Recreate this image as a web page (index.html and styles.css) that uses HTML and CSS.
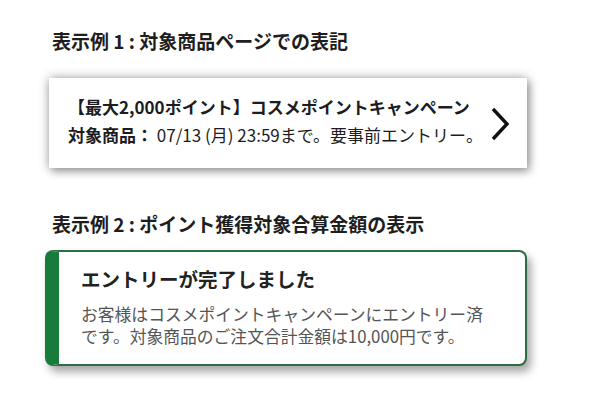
FILE: index.html
```html
<!DOCTYPE html>
<html lang="ja">
<head>
    <meta charset="UTF-8">
    <meta name="viewport" content="width=device-width, initial-scale=1.0">
    <title>表示例</title>
    <link rel="stylesheet" href="styles.css">
</head>
<body>
    <main class="samples">
        <h2 class="sample-title">表示例 1 : 対象商品ページでの表記</h2>

        <a href="#" class="campaign-card">
            <div class="campaign-text">
                <p class="campaign-name">【最大2,000ポイント】コスメポイントキャンペーン</p>
                <p class="campaign-term"><strong>対象商品：</strong> 07/13 (月) 23:59まで。要事前エントリー。</p>
            </div>
            <svg class="chevron" width="20" height="36" viewBox="0 0 20 36">
                <path d="M3 3 L17 18 L3 33" fill="none" stroke="#111" stroke-width="3.4"/>
            </svg>
        </a>

        <h2 class="sample-title second">表示例 2 : ポイント獲得対象合算金額の表示</h2>

        <div class="entry-notice">
            <h3>エントリーが完了しました</h3>
            <p>お客様はコスメポイントキャンペーンにエントリー済<br>です。対象商品のご注文合計金額は10,000円です。</p>
        </div>
    </main>
</body>
</html>
```

FILE: styles.css
```css
body {
    margin: 0;
    padding: 0;
    background-color: #ffffff;
    font-family: "Noto Sans CJK JP", "Noto Sans", sans-serif;
    color: #222;
}

p {
    margin: 0;
}

.samples {
    width: 482px;
    padding: 28px 0 30px 45px;
}

.sample-title {
    margin: 0 0 24px 7px;
    font-size: 19px;
    line-height: 26px;
    font-weight: bold;
    color: #1e1e1e;
}

.sample-title.second {
    margin-top: 43px;
    margin-bottom: 13px;
}

/* campaign link as shown on the product page */
.campaign-card {
    display: flex;
    align-items: center;
    justify-content: space-between;
    margin-left: 4px;
    height: 90px;
    box-sizing: border-box;
    padding: 0 17px 4px 19px;
    background-color: #fff;
    color: #1c1c22;
    text-decoration: none;
    box-shadow: 0 0 10px rgba(0, 0, 0, 0.35), 3px 4px 8px rgba(0, 0, 0, 0.25);
}

.campaign-text {
    font-size: 17px;
    line-height: 28px;
}

.campaign-name {
    font-weight: bold;
}

.campaign-term strong {
    font-weight: bold;
}

.chevron {
    flex-shrink: 0;
    margin-top: 6px;
}

/* entry complete message */
.entry-notice {
    box-sizing: border-box;
    height: 116px;
    padding: 14px 16px 0 22px;
    border: 2px solid #2b6e45;
    border-left: 14px solid #177c3b;
    border-radius: 8px;
    background-color: #fff;
    box-shadow: 4px 6px 8px rgba(0, 0, 0, 0.35);
}

.entry-notice h3 {
    margin: 0 0 11px 0;
    font-size: 19.5px;
    line-height: 26px;
    font-weight: bold;
    color: #222;
}

.entry-notice p {
    font-size: 16.8px;
    line-height: 22px;
    color: #555;
}
```
